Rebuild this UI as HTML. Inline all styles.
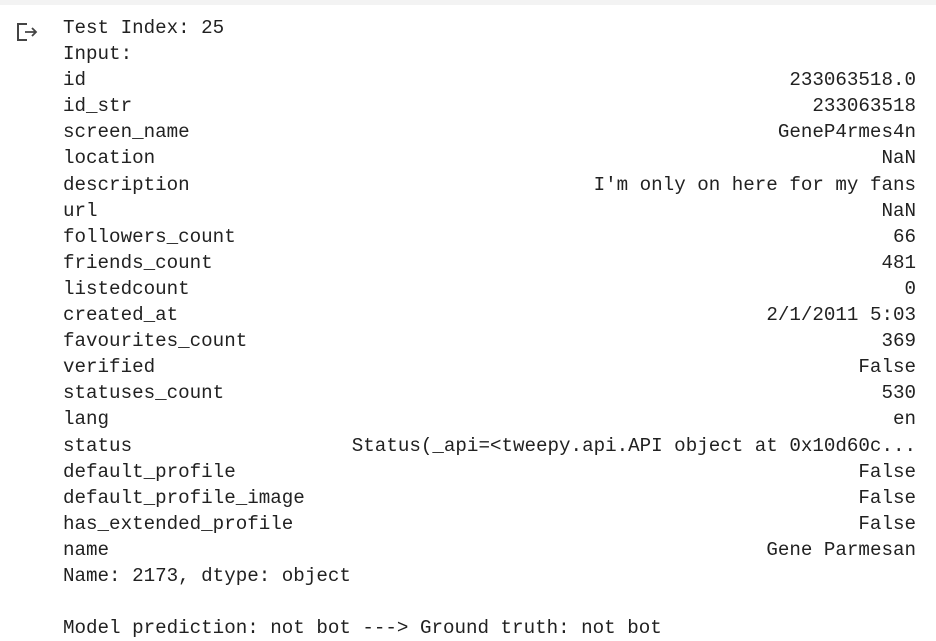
<!DOCTYPE html>
<html><head><meta charset="utf-8"><style>
html,body{margin:0;padding:0;background:#fff;width:936px;height:640px;overflow:hidden}
.top{position:absolute;left:0;top:0;width:936px;height:5px;background:#f3f3f3}
.out{position:absolute;left:63px;top:15px;width:853px;font-family:"Liberation Mono",monospace;font-size:19.2px;line-height:26.1px;color:#212121;white-space:pre}
.r{display:flex;justify-content:space-between;height:26.1px}
</style></head><body>
<div class="top"></div>
<svg style="position:absolute;left:15px;top:21px" width="24" height="22" viewBox="0 0 24 22">
<path d="M12 3H3v16h9" fill="none" stroke="#444" stroke-width="2"/>
<path d="M10 11h11M17 7l4 4-4 4" fill="none" stroke="#444" stroke-width="1.8"/>
</svg>
<div class="out"><div class="r"><span>Test Index: 25</span></div><div class="r"><span>Input:</span></div><div class="r"><span>id</span><span>233063518.0</span></div><div class="r"><span>id_str</span><span>233063518</span></div><div class="r"><span>screen_name</span><span>GeneP4rmes4n</span></div><div class="r"><span>location</span><span>NaN</span></div><div class="r"><span>description</span><span>I'm only on here for my fans</span></div><div class="r"><span>url</span><span>NaN</span></div><div class="r"><span>followers_count</span><span>66</span></div><div class="r"><span>friends_count</span><span>481</span></div><div class="r"><span>listedcount</span><span>0</span></div><div class="r"><span>created_at</span><span>2/1/2011 5:03</span></div><div class="r"><span>favourites_count</span><span>369</span></div><div class="r"><span>verified</span><span>False</span></div><div class="r"><span>statuses_count</span><span>530</span></div><div class="r"><span>lang</span><span>en</span></div><div class="r"><span>status</span><span>Status(_api=&lt;tweepy.api.API object at 0x10d60c...</span></div><div class="r"><span>default_profile</span><span>False</span></div><div class="r"><span>default_profile_image</span><span>False</span></div><div class="r"><span>has_extended_profile</span><span>False</span></div><div class="r"><span>name</span><span>Gene Parmesan</span></div><div class="r"><span>Name: 2173, dtype: object</span></div><div class="r"><span> </span></div><div class="r"><span>Model prediction: not bot ---&gt; Ground truth: not bot</span></div></div>
</body></html>
